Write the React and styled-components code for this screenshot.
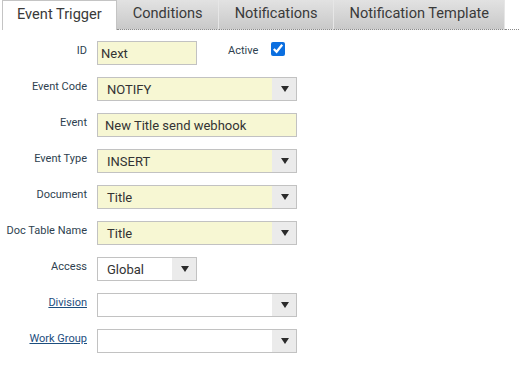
import React from "react";
import styled, { createGlobalStyle, css } from "styled-components";

const Global = createGlobalStyle`
  html, body { margin: 0; padding: 0; background: #fff; }
  body { font-family: Roboto, "Liberation Sans", Arial, sans-serif; }
  * { box-sizing: border-box; }
`;

const Page = styled.div`
  width: 519px;
  height: 366px;
  padding-left: 2px;
  overflow: hidden;
`;

const TabBar = styled.div`
  display: flex;
  height: 30px;
`;

const Tab = styled.div`
  height: 30px;
  display: flex;
  align-items: center;
  font-size: 14.6px;
  color: #3a3a3a;
  white-space: nowrap;
  ${(p) =>
    p.$active
      ? css`
          padding: 0 14px 3px;
          background: #fff;
          border: 1px solid #c4c4c4;
          border-bottom: none;
        `
      : css`
          padding: 0 15px 3px 16px;
          background: linear-gradient(#e2e2e2, #c9c9c9);
          border-right: 1px solid #e6e6e6;
          border-bottom: 1px dotted #8a8a8a;
        `}
`;

const Filler = styled.div`
  flex: 1;
  border-bottom: 1px dotted #8a8a8a;
`;

const Form = styled.div`
  display: grid;
  grid-template-columns: 85px auto;
  column-gap: 10px;
  row-gap: 12px;
  padding-top: 11px;
  justify-content: start;
`;

const Label = styled.div`
  font-size: 11px;
  line-height: 13px;
  color: #2e3f4f;
  text-align: right;
  padding-top: 3px;
  white-space: nowrap;
  ${(p) =>
    p.$link &&
    css`
      color: #1d4e7e;
      text-decoration: underline;
    `}
`;

const Field = styled.div`
  display: flex;
  align-items: flex-start;
`;

const TextBox = styled.div`
  width: ${(p) => p.$w}px;
  height: 24px;
  border: 1px solid #c2c2c2;
  background: #f7f7d3;
  font-size: 13px;
  color: #333;
  display: flex;
  align-items: center;
  padding-left: ${(p) => p.$pad}px;
  white-space: nowrap;
`;

const SelectBox = styled.div`
  width: ${(p) => p.$w}px;
  height: 24px;
  border: 1px solid #c2c2c2;
  background: ${(p) => (p.$plain ? "#fff" : "#f7f7d3")};
  display: flex;
  font-size: 13px;
  color: #333;
`;

const SelectValue = styled.div`
  flex: 1;
  display: flex;
  align-items: center;
  padding-left: 9px;
  white-space: nowrap;
`;

const ArrowArea = styled.div`
  width: 24px;
  background: #ebebeb;
  display: flex;
  align-items: center;
  justify-content: center;
`;

const Caret = styled.div`
  width: 0;
  height: 0;
  border-left: 4px solid transparent;
  border-right: 4px solid transparent;
  border-top: 6px solid #2b2b2b;
  margin-left: 1px;
`;

const ActiveLabel = styled.div`
  font-size: 11px;
  line-height: 13px;
  color: #2e3f4f;
  padding-top: 3px;
  margin-left: 31px;
`;

const Check = styled.input`
  width: 14px;
  height: 14px;
  margin: 1px 0 0 13px;
  accent-color: #0b6fe0;
`;

function Select({ value, w = 200, plain }) {
  return (
    <SelectBox $w={w} $plain={plain}>
      <SelectValue>{value}</SelectValue>
      <ArrowArea>
        <Caret />
      </ArrowArea>
    </SelectBox>
  );
}

export default function App() {
  return (
    <Page>
      <Global />
      <TabBar>
        <Tab $active>Event Trigger</Tab>
        <Tab>Conditions</Tab>
        <Tab>Notifications</Tab>
        <Tab>Notification Template</Tab>
        <Filler />
      </TabBar>
      <Form>
        <Label>ID</Label>
        <Field>
          <TextBox $w={100} $pad={3}>Next</TextBox>
          <ActiveLabel>Active</ActiveLabel>
          <Check type="checkbox" checked readOnly />
        </Field>

        <Label>Event Code</Label>
        <Field>
          <Select value="NOTIFY" />
        </Field>

        <Label>Event</Label>
        <Field>
          <TextBox $w={200} $pad={7}>New Title send webhook</TextBox>
        </Field>

        <Label>Event Type</Label>
        <Field>
          <Select value="INSERT" />
        </Field>

        <Label>Document</Label>
        <Field>
          <Select value="Title" />
        </Field>

        <Label>Doc Table Name</Label>
        <Field>
          <Select value="Title" />
        </Field>

        <Label>Access</Label>
        <Field>
          <Select value="Global" w={100} plain />
        </Field>

        <Label $link>Division</Label>
        <Field>
          <Select value="" plain />
        </Field>

        <Label $link>Work Group</Label>
        <Field>
          <Select value="" plain />
        </Field>
      </Form>
    </Page>
  );
}
